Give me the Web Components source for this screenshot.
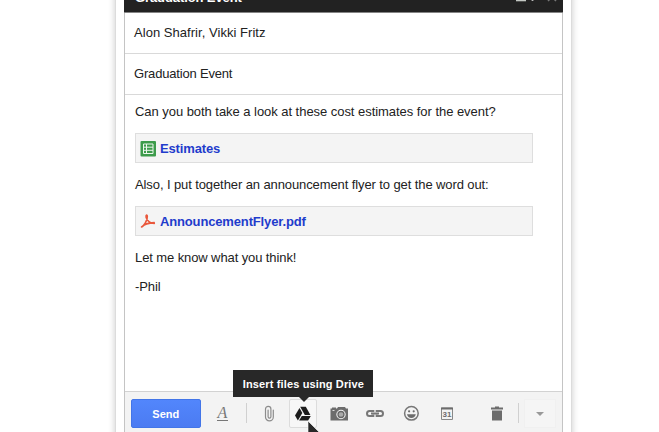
<!DOCTYPE html>
<html lang="en">
<head>
<meta charset="utf-8">
<title>Graduation Event</title>
<style>
body {
  margin: 0;
  height: 432px;
  overflow: hidden;
  background: #fff;
  font: 13px/16px "Liberation Sans", Arial, sans-serif;
  color: #222;
}
</style>
</head>
<body>
<compose-window>
  <window-header slot="header">Graduation Event</window-header>
  <compose-field style="letter-spacing: .04px">Alon Shafrir, Vikki Fritz</compose-field>
  <compose-field style="letter-spacing: -.18px">Graduation Event</compose-field>
  <message-body>
    <p style="letter-spacing: -.045px">Can you both take a look at these cost estimates for the event?</p>
    <file-chip type="sheet">Estimates</file-chip>
    <p>Also, I put together an announcement flyer to get the word out:</p>
    <file-chip type="pdf">AnnouncementFlyer.pdf</file-chip>
    <p>Let me know what you think!</p>
    <p>-Phil</p>
  </message-body>
  <compose-toolbar slot="toolbar"></compose-toolbar>
</compose-window>

<script>
var define = function(name, css, html, ready) {
  customElements.define(name, class extends HTMLElement {
    constructor() {
      super();
      this.attachShadow({ mode: "open" });
      this.shadowRoot.innerHTML = `<style>${css}</style>${html}`;
    }

    connectedCallback() {
      if (ready) ready.call(this, this.shadowRoot);
    }
  });
};

define("compose-window", `
:host {
  display: block;
  box-sizing: border-box;
  width: 457px;
  height: 450px;
  margin: -10px 0 0 115px;
  padding: 0 8px;
  border: solid #dcdcdc;
  border-width: 0 1px;
  box-shadow: 0 0 6px 1px rgba(0, 0, 0, .16);
}
.frame {
  display: flex;
  flex-direction: column;
  box-sizing: border-box;
  height: 100%;
  border: solid #c4c4c4;
  border-width: 0 1px;
}
.content {
  flex: 1;
}
`, `
<div class="frame">
  <slot name="header"></slot>
  <div class="content"><slot></slot></div>
  <slot name="toolbar"></slot>
</div>
`);

define("window-header", `
:host {
  display: flex;
  align-items: flex-start;
  box-sizing: border-box;
  height: 23px;
  margin: 0 -1px;
  padding: 0 6px 0 11px;
  background: #222;
  border-bottom: 1px solid #858585;
  color: #fff;
  font-weight: bold;
}
.title {
  flex: 1;
  letter-spacing: -.1px;
}
svg {
  display: block;
}
`, `
<span class="title"><slot></slot></span>
<svg width="42" height="13" viewBox="0 0 42 13" fill="none">
  <path d="M1 10.5h10" stroke="#c4c8c4" stroke-width="1.6"/>
  <path d="M17.5 6v5" stroke="#bbb" stroke-width="1.8"/>
  <path d="M33 11l8-8m0 8l-8-8" stroke="#777" stroke-width="1.5"/>
</svg>
`);

define("compose-field", `
:host {
  display: flex;
  align-items: center;
  box-sizing: border-box;
  height: 41px;
  padding: 0 9px;
  border-bottom: 1px solid #d9d9d9;
}
`, `<slot></slot>`);

define("message-body", `
:host {
  display: flex;
  flex-direction: column;
  padding: 9px 29px 0 10px;
  letter-spacing: -.1px;
}
::slotted(p) {
  margin: 0 0 13px;
}
::slotted(file-chip) {
  margin-bottom: 14px;
}
`, `<slot></slot>`);

var fileIcons = {
  sheet: `
    <rect x="-.5" y="0" width="15.5" height="15.5" rx="1" fill="#3d9b4b"/>
    <path d="M2.5 3h9.500v9.500H2.500zM2.500 6.200H12M2.500 9.300H12M5.500 3v9.500" fill="none" stroke="#edf6ed" stroke-width="1"/>
  `,
  pdf: `
    <path d="M.5 13C2.600 12 6.700 6.700 6.300 2.200 6.100.300 4.700 1.200 5.100 3.200 5.900 6.500 9.200 9.300 13.300 9.400M1.200 12.700C3.500 9.800 7.500 8.900 13.200 8.600"
      fill="none" stroke="#e9573b" stroke-width="1.600" stroke-linecap="round"/>
  `
};

define("file-chip", `
:host {
  display: flex;
  align-items: center;
  gap: 4px;
  box-sizing: border-box;
  height: 30px;
  padding: 0 5px;
  border: 1px solid #dedede;
  background: #f4f4f4;
  color: #1f3ccc;
  font-weight: bold;
  letter-spacing: -.15px;
}
svg {
  width: 15px;
  height: 15px;
  overflow: visible;
}
span {
  padding-top: 2px;
}
`, `<svg viewBox="0 0 15 15"></svg><span><slot></slot></span>`, function(root) {
  root.querySelector("svg").innerHTML = fileIcons[this.getAttribute("type")];
});

// all toolbar glyphs are drawn in a 20x20 box
var toolIcons = {
  clip: `<path d="M14.300 6v7a3.900 3.900 0 0 1-7.800 0V5a2.700 2.700 0 0 1 5.400 0v7.700a1.400 1.400 0 0 1-2.800 0V6" fill="none" stroke="#8c8c8c" stroke-width="1.200" stroke-linecap="round"/>`,
  drive: `
    <path d="M7.200 2.800h5.600l4.600 8.100h-5.600z"/>
    <path d="M6.500 4l2.800 4.900-4.400 7.600-2.900-4.900z"/>
    <path d="M8.800 12h9l-2.700 4.600H6.100z"/>
  `,
  camera: `
    <path fill-rule="evenodd" d="M3 3.500h4v1h1l1-1.500h7l1 1.500h2v12H1.500v-12H3zM12 5.800a4.700 4.700 0 1 0 0 9.400 4.700 4.700 0 0 0 0-9.400z"/>
    <circle cx="12" cy="10.500" r="3" fill="#aaa" stroke="#666" stroke-width="1.300"/>
    <path d="M3.500 6.500h2" stroke="#ddd"/>
  `,
  link: `<path d="M8.300 10.800v1.100H4.500a2.400 2.400 0 0 1 0-5h3.800V8M11.700 10.800v1.100h3.800a2.400 2.400 0 0 0 0-5h-3.800V8M6 9.400h8" fill="none" stroke="#777" stroke-width="2"/>`,
  smile: `
    <g transform="translate(.4 -.7)">
      <circle cx="10" cy="10" r="6.800" fill="none" stroke="#777" stroke-width="1.500"/>
      <circle cx="7.700" cy="8" r="1.100"/><circle cx="12.300" cy="8" r="1.100"/>
      <path d="M5.600 11h8.800c-.4 2.400-2.200 3.700-4.400 3.700S6 13.400 5.600 11z"/>
    </g>
  `,
  date: `
    <path d="M4.500 4h11v11.500h-11z" fill="none" stroke="#888"/>
    <path d="M4 3.500h12v2H4z"/>
    <text x="10" y="13.300" text-anchor="middle" font-family="Liberation Sans, sans-serif" font-size="8" font-weight="bold">31</text>
  `,
  trash: `<path d="M4 3.500h4v-1h4v1h4v2H4zM5 6.500h10v10H5z"/>`
};

define("tool-button", `
:host {
  display: flex;
  align-items: center;
  justify-content: center;
  box-sizing: border-box;
  width: 28px;
  height: 29px;
  border: 1px solid transparent;
  border-radius: 2px;
}
:host([active]) {
  border-color: #dcdcdc;
  background: #f7f7f7;
  --icon: #1c1c1c;
}
svg {
  flex: none;
  fill: var(--icon, #6c6c6c);
}
`, `<svg width="20" height="20" viewBox="0 0 20 20"></svg>`, function(root) {
  root.querySelector("svg").innerHTML = toolIcons[this.getAttribute("icon")];
});

define("tool-tip", `
:host {
  display: block;
  box-sizing: border-box;
  width: 140px;
  height: 27px;
  background: #282828;
  color: #fff;
  font: bold 11px/28px "Liberation Sans", Arial, sans-serif;
  letter-spacing: .14px;
  text-align: center;
  white-space: nowrap;
}
:host::after {
  content: "";
  position: absolute;
  top: 100%;
  left: 66px;
  border: 5px solid transparent;
  border-top-color: #282828;
  border-bottom: 0;
}
`, `<slot></slot>`);

define("compose-toolbar", `
:host {
  display: flex;
  box-sizing: border-box;
  height: 49px;
  padding: 7px 6px 0;
  background: #f3f3f3;
  border-top: 1px solid #d2d2d2;
}
.send {
  box-sizing: border-box;
  width: 70px;
  height: 29px;
  padding: 0;
  border: 1px solid #4275e8;
  border-radius: 2px;
  background: linear-gradient(#5286fc, #4b7bf2);
  color: #fff;
  font: bold 11px "Liberation Sans", Arial, sans-serif;
}
.format {
  width: 12px;
  height: 14px;
  margin: 7px 0 0 16px;
  border-bottom: 1px solid #777;
  color: #777;
  font: italic 16px/13px "Liberation Serif", serif;
  text-align: center;
}
hr {
  width: 1px;
  height: 20px;
  margin: 4px 0 0;
  border: 0;
  background: #d0d0d0;
}
.tools {
  display: flex;
  gap: 8px;
  margin-left: 8px;
}
.anchor {
  position: relative;
}
tool-tip {
  position: absolute;
  left: -56px;
  top: -29px;
}
.cursor {
  position: absolute;
  left: 18px;
  top: 22px;
}
.more {
  display: flex;
  align-items: center;
  justify-content: center;
  box-sizing: border-box;
  width: 32px;
  height: 29px;
  margin-left: 5px;
  border: 1px solid #f0f0f0;
  background: #f5f5f5;
}
.more::after {
  content: "";
  border: 4px solid transparent;
  border-top-color: #999;
  border-bottom: 0;
}
`, `
<button class="send">Send</button>
<div class="format">A</div>
<hr style="margin-left: 18px">
<div class="tools">
  <tool-button icon="clip"></tool-button>
  <div class="anchor" style="margin-left: -2px">
    <tool-button icon="drive" active></tool-button>
    <tool-tip>Insert files using Drive</tool-tip>
    <svg class="cursor" width="18" height="22" viewBox="0 0 18 22">
      <path d="M1 0v20l5-5h10z" fill="#282828" stroke="#fff" stroke-width=".6"/>
    </svg>
  </div>
  <tool-button icon="camera"></tool-button>
  <tool-button icon="link"></tool-button>
  <tool-button icon="smile"></tool-button>
  <tool-button icon="date"></tool-button>
</div>
<tool-button icon="trash" style="margin-left: 22px"></tool-button>
<hr style="margin-left: 7px">
<div class="more"></div>
`);
</script>
</body>
</html>
